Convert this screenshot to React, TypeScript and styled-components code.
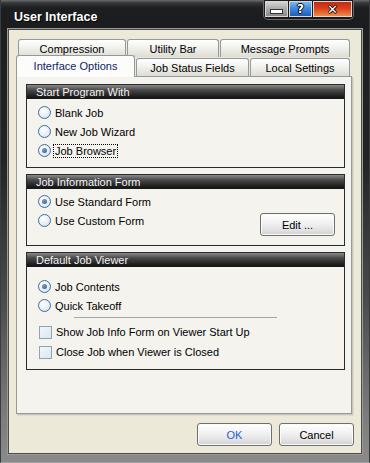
import styled, { createGlobalStyle, css } from 'styled-components'

const GlobalStyle = createGlobalStyle`
  html, body {
    margin: 0;
    padding: 0;
    background: #1c1d1f;
  }
  body {
    font-family: "Liberation Sans", Arial, sans-serif;
    font-size: 11px;
    color: #000;
  }
`

const Window = styled.div`
  width: 370px;
  height: 463px;
  display: flex;
  flex-direction: column;
  box-sizing: border-box;
  background: linear-gradient(to bottom, #1c1d1f 0%, #232426 35%, #4a4b4c 65%, #7c7c7c 90%, #8a8a8a 100%);
  border-left: 1px solid #3a3b3d;
  border-right: 1px solid #3a3b3d;
  border-bottom: 1px solid #a0a0a0;
`

const TitleBar = styled.div`
  height: 29px;
  flex-shrink: 0;
  display: flex;
  align-items: flex-start;
  background: linear-gradient(to bottom, #6c6d6f 0px, #343537 3px, #1d1e20 8px, #1b1c1e 100%);
`

const Title = styled.div`
  font-family: "Liberation Sans", Arial, sans-serif;
  font-weight: 700;
  font-size: 12.5px;
  color: #fff;
  padding: 10px 0 0 13px;
  text-shadow: 1px 1px 0 #000;
`

const ControlGroup = styled.div`
  margin-left: auto;
  margin-right: 15px;
  display: flex;
  gap: 1px;
  padding: 1px 1px 2px;
  background: #1a1a1a;
  border: 1px solid #6a6a6a;
  border-top: none;
  border-radius: 0 0 5px 5px;
`

const ctrlKinds = {
  min: css`
    width: 23px;
    background: linear-gradient(to bottom, #d4d4d4, #a8a8a8 50%, #8a8a8a);
  `,
  help: css`
    width: 23px;
    background: linear-gradient(to bottom, #7cbaf4, #3f88de 45%, #1f5db5);
  `,
  close: css`
    width: 39px;
    font-size: 13px;
    background: linear-gradient(to bottom, #c42a12, #d8401c 45%, #ee8a48);
  `,
}

const CtrlButton = styled.div<{ $kind: 'min' | 'help' | 'close' }>`
  height: 16px;
  display: flex;
  align-items: center;
  justify-content: center;
  border: 1px solid #d8d8d8;
  box-sizing: border-box;
  font-family: "DejaVu Sans", sans-serif;
  font-weight: 700;
  font-size: 12px;
  color: #fff;
  text-shadow: 1px 0 0 #000, -1px 0 0 #000, 0 1px 0 #000, 0 -1px 0 #000;
  ${p => ctrlKinds[p.$kind]}
`

const MinBar = styled.div`
  width: 11px;
  height: 3px;
  margin-top: 5px;
  background: #fff;
  border: 1px solid #333;
`

const Client = styled.div`
  flex: 1;
  margin: 0 7px 9px 7px;
  display: flex;
  flex-direction: column;
  background: #ece9d8;
  border: 1px solid #4c4c4c;
  box-shadow: 0 0 0 1px #9a9a9a;
  padding: 9px 7px 7px 7px;
`

const TabRow = styled.div<{ $top?: boolean }>`
  display: flex;
  align-items: flex-end;
  gap: 1px;
  ${p => p.$top
    ? css`
      height: 18px;
      margin-left: 2px;
    `
    : css`
      height: 21px;
      margin-top: -2px;
      position: relative;
      z-index: 2;
    `}
`

const Tab = styled.div<{ $w: number; $active?: boolean }>`
  width: ${p => p.$w}px;
  box-sizing: border-box;
  height: 18px;
  display: flex;
  align-items: center;
  justify-content: center;
  border: 1px solid #919b9c;
  border-bottom: none;
  border-radius: 3px 3px 0 0;
  background: linear-gradient(to bottom, #ffffff, #f3f3ef 40%, #dedcd4);
  padding-top: 1px;
  ${p => p.$active && css`
    height: 22px;
    margin-bottom: -1px;
    background: #fcfcfa;
    color: #0c2468;
    padding-bottom: 2px;
  `}
`

const Panel = styled.div`
  width: 336px;
  height: 338px;
  box-sizing: border-box;
  background: #f4f3ee;
  border: 1px solid #919b9c;
  box-shadow: 1px 1px 0 #c8c6ba, 2px 2px 0 #dedbcd;
  padding: 7px 6px 0 9px;
  display: flex;
  flex-direction: column;
  gap: 6px;
`

const Group = styled.div`
  border: 1px solid #2a2a2a;
  background: #f4f3ee;
`

const GroupHeader = styled.div`
  height: 14px;
  line-height: 14px;
  padding-left: 9px;
  color: #f2f2f2;
  background: linear-gradient(to bottom, #8a8a8a 0%, #4a4a4a 35%, #1e1e1e 80%, #151515 100%);
`

const GroupBody = styled.div<{ $pt: number; $pb: number }>`
  padding: ${p => p.$pt}px 9px ${p => p.$pb}px 11px;
`

const SplitBody = styled(GroupBody)`
  display: flex;
  align-items: flex-end;
  justify-content: space-between;
`

const OptionList = styled.div<{ $mb?: number }>`
  display: flex;
  flex-direction: column;
  margin-bottom: ${p => p.$mb || 0}px;
`

const OptionRow = styled.label<{ $h?: number }>`
  height: ${p => p.$h || 19}px;
  display: flex;
  align-items: center;
  gap: 4px;
`

const Radio = styled.span<{ $checked?: boolean }>`
  width: 13px;
  height: 13px;
  box-sizing: border-box;
  border-radius: 50%;
  border: 1px solid #3b6f9e;
  background: radial-gradient(circle at 40% 35%, #ffffff 0%, #eef3f6 40%, #cfdde8 100%);
  display: flex;
  align-items: center;
  justify-content: center;
  &::after {
    content: "";
    display: ${p => (p.$checked ? 'block' : 'none')};
    width: 5px;
    height: 5px;
    border-radius: 50%;
    background: radial-gradient(circle at 40% 35%, #7c9cbc, #2c5a86);
  }
`

const Checkbox = styled.span`
  width: 13px;
  height: 13px;
  box-sizing: border-box;
  border: 1px solid #8aa4bd;
  background: linear-gradient(135deg, #f2f6f9, #dce6ee);
  margin-left: 1px;
`

const FocusLabel = styled.span`
  outline: 1px dotted #000;
  outline-offset: 0;
  padding: 0 1px;
  margin-left: -1px;
`

const Separator = styled.div`
  height: 1px;
  width: 203px;
  margin: 2px 0 4px 36px;
  background: #a6a6a6;
`

const Button = styled.div<{ $primary?: boolean }>`
  width: 75px;
  height: 23px;
  box-sizing: border-box;
  display: flex;
  align-items: center;
  justify-content: center;
  border: 1px solid #6f6f6f;
  border-radius: 3px;
  background: linear-gradient(to bottom, #ffffff 0%, #f1f1f1 45%, #e0e0e0 80%, #cfcfcf 100%);
  box-shadow: inset 0 0 0 1px #fafafa;
  color: ${p => (p.$primary ? '#1d5fd6' : '#000')};
`

const ButtonRow = styled.div`
  margin-top: 9px;
  display: flex;
  justify-content: flex-end;
  gap: 7px;
`

const App = () => {
  return (
    <>
      <GlobalStyle />
      <Window>
        <TitleBar>
          <Title>User Interface</Title>
          <ControlGroup>
            <CtrlButton $kind="min"><MinBar /></CtrlButton>
            <CtrlButton $kind="help">?</CtrlButton>
            <CtrlButton $kind="close">✕</CtrlButton>
          </ControlGroup>
        </TitleBar>
        <Client>
          <TabRow $top>
            <Tab $w={108}>Compression</Tab>
            <Tab $w={92}>Utility Bar</Tab>
            <Tab $w={130}>Message Prompts</Tab>
          </TabRow>
          <TabRow>
            <Tab $w={119} $active>Interface Options</Tab>
            <Tab $w={113}>Job Status Fields</Tab>
            <Tab $w={100}>Local Settings</Tab>
          </TabRow>
          <Panel>
            <Group>
              <GroupHeader>Start Program With</GroupHeader>
              <GroupBody $pt={4} $pb={7}>
                <OptionList>
                  <OptionRow><Radio />Blank Job</OptionRow>
                  <OptionRow><Radio />New Job Wizard</OptionRow>
                  <OptionRow><Radio $checked /><FocusLabel>Job Browser</FocusLabel></OptionRow>
                </OptionList>
              </GroupBody>
            </Group>
            <Group>
              <GroupHeader>Job Information Form</GroupHeader>
              <SplitBody $pt={3} $pb={9}>
                <OptionList $mb={6}>
                  <OptionRow><Radio $checked />Use Standard Form</OptionRow>
                  <OptionRow><Radio />Use Custom Form</OptionRow>
                </OptionList>
                <Button>Edit ...</Button>
              </SplitBody>
            </Group>
            <Group>
              <GroupHeader>Default Job Viewer</GroupHeader>
              <GroupBody $pt={10} $pb={7}>
                <OptionList>
                  <OptionRow><Radio $checked />Job Contents</OptionRow>
                  <OptionRow><Radio />Quick Takeoff</OptionRow>
                </OptionList>
                <Separator />
                <OptionList>
                  <OptionRow $h={20}><Checkbox />Show Job Info Form on Viewer Start Up</OptionRow>
                  <OptionRow $h={20}><Checkbox />Close Job when Viewer is Closed</OptionRow>
                </OptionList>
              </GroupBody>
            </Group>
          </Panel>
          <ButtonRow>
            <Button $primary>OK</Button>
            <Button>Cancel</Button>
          </ButtonRow>
        </Client>
      </Window>
    </>
  )
}

export default App
